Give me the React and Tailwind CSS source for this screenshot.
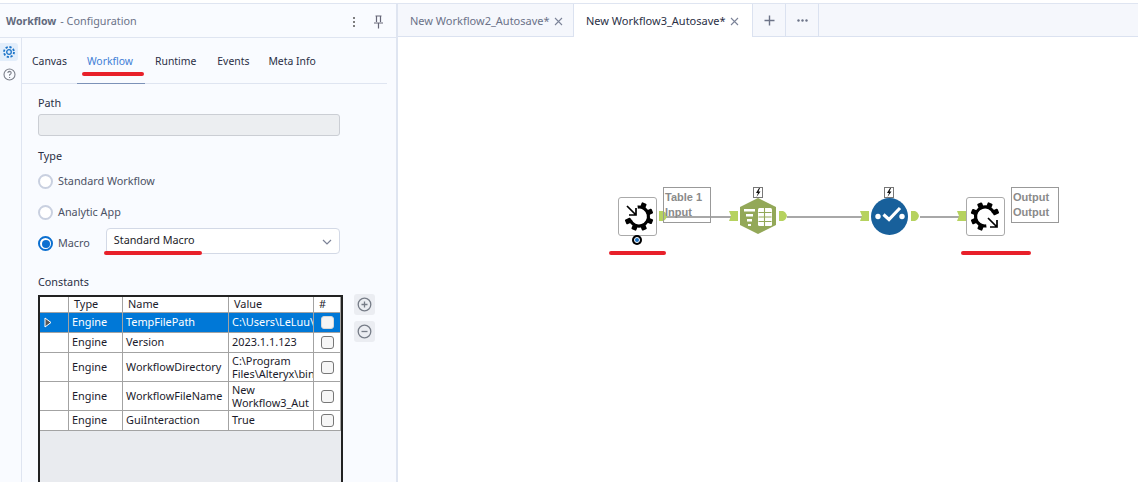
import React from "react";

const F = { fontFamily: '"Noto Sans", "Open Sans", sans-serif' };

function Radio({ on }) {
  return on ? (
    <span className="w-[15px] h-[15px] rounded-full border-2 border-[#0b6fd0] bg-white flex items-center justify-center shrink-0">
      <span className="w-[8px] h-[8px] rounded-full bg-[#0b6fd0]" />
    </span>
  ) : (
    <span className="w-[15px] h-[15px] rounded-full border-2 border-[#c9d0e0] bg-white shrink-0" />
  );
}

function polar(cx, cy, r, deg) {
  const a = ((deg - 90) * Math.PI) / 180;
  return [cx + r * Math.cos(a), cy + r * Math.sin(a)];
}

function Gear({ flip }) {
  const cx = 16;
  const cy = 15.5;
  const [sx, sy] = polar(cx, cy, 9.5, -8);
  const [ex, ey] = polar(cx, cy, 9.5, 248);
  const teeth = [22, 67, 112, 157, 202, 247];
  const ring = (
    <g transform={flip ? "rotate(180 15 15.5)" : undefined}>
      {teeth.map((a) => (
        <rect key={a} x={cx - 2.6} y={cy - 14.5} width="5.2" height="6" rx="1" fill="#000" transform={`rotate(${a} ${cx} ${cy})`} />
      ))}
      <path d={`M ${sx} ${sy} A 9.5 9.5 0 1 1 ${ex} ${ey}`} fill="none" stroke="#000" strokeWidth="3.2" />
    </g>
  );
  return (
    <svg width="32" height="31" viewBox="0 0 30 31">
      {ring}
      {flip ? (
        <path d="M17 17 L26 26 M26 19 V26 H19" stroke="#000" strokeWidth="1.7" fill="none" />
      ) : (
        <path d="M4 5 L13 14 M13 7 V14 H6" stroke="#000" strokeWidth="1.7" fill="none" />
      )}
    </svg>
  );
}

function Bolt({ className }) {
  return (
    <div className={`absolute w-[10px] h-[11px] border border-[#777] bg-white flex items-center justify-center ${className}`}>
      <svg width="6" height="9" viewBox="0 0 6 9"><path d="M4 0 L1 5 H3 L1.5 9 L5.5 3.5 H3.5 L5 0 Z" fill="#111" /></svg>
    </div>
  );
}

function InPort({ className }) {
  return (
    <svg className={`absolute ${className}`} width="9" height="10" viewBox="0 0 9 10">
      <path d="M0 0 H9 V10 H0 L2 5 Z" fill="#b6d25f" />
    </svg>
  );
}

function OutPort({ className }) {
  return (
    <svg className={`absolute ${className}`} width="8" height="10" viewBox="0 0 8 10">
      <path d="M0 0 H4 Q7 1 8 5 Q7 9 4 10 H0 Z" fill="#b6d25f" />
    </svg>
  );
}

function Cell({ children, className = "" }) {
  return <div className={`border-r border-b border-[#a3a3a3] flex items-center overflow-hidden whitespace-nowrap ${className}`}>{children}</div>;
}

function Check({ sel }) {
  return <span className={`w-[13px] h-[13px] rounded-[3px] border ${sel ? "border-[#d8d8d8] bg-[#f4f4f4]" : "border-[#777] bg-[#f6f6f6]"}`} />;
}

const rows = [
  { name: "TempFilePath", value: "C:\\Users\\LeLuu\\", h: "h-[20px]", sel: true },
  { name: "Version", value: "2023.1.1.123", h: "h-[20px]" },
  { name: "WorkflowDirectory", value: ["C:\\Program", "Files\\Alteryx\\bin"], h: "h-[29px]" },
  { name: "WorkflowFileName", value: ["New", "Workflow3_Aut"], h: "h-[29px]" },
  { name: "GuiInteraction", value: "True", h: "h-[20px]" },
];

const cols = "grid grid-cols-[29px_54px_106px_85px_27px]";

function Table() {
  return (
    <div className="w-[305px] h-[188px] border-2 border-[#222] bg-[#e9ebef] border-b-0 text-[10.9px] text-[#1b1b2b]">
      <div className={`${cols} h-[16px] bg-white`}>
        <Cell />
        <Cell className="pl-[5px]">Type</Cell>
        <Cell className="pl-[5px]">Name</Cell>
        <Cell className="pl-[5px]">Value</Cell>
        <Cell className="pl-[5px]">#</Cell>
      </div>
      {rows.map((r) => (
        <div key={r.name} className={`${cols} ${r.h} ${r.sel ? "bg-[#0078d7] text-white" : "bg-white"}`}>
          <Cell className="pl-[4px]">
            {r.sel && (
              <svg width="8" height="11" viewBox="0 0 8 11"><path d="M1 1 L7 5.5 L1 10 Z" fill="#555" stroke="#fff" strokeWidth="1" /></svg>
            )}
          </Cell>
          <Cell className="pl-[3px]">Engine</Cell>
          <Cell className="pl-[3px]">{r.name}</Cell>
          <Cell className="pl-[3px]">
            {Array.isArray(r.value) ? (
              <div className="leading-[13px]">
                <div>{r.value[0]}</div>
                <div>{r.value[1]}</div>
              </div>
            ) : (
              r.value
            )}
          </Cell>
          <Cell className="justify-center"><Check sel={r.sel} /></Cell>
        </div>
      ))}
    </div>
  );
}

function Tab({ active, label, w }) {
  return (
    <div className={`h-full flex items-center pt-[2px] border-r border-[#dbe2f0] pl-[12px] ${w} ${active ? "bg-white text-[#2a2f45]" : "bg-[#f5f7fc] text-[#6b7288] border-b"}`}>
      <span>{label}</span>
      <svg className="ml-[4px]" width="9" height="9" viewBox="0 0 9 9"><path d="M1 1 L8 8 M8 1 L1 8" stroke="#7c8499" strokeWidth="1.1" /></svg>
    </div>
  );
}

export default function App() {
  return (
    <div style={F} className="w-[1138px] h-[482px] relative overflow-hidden bg-white flex flex-col text-[10.8px]">
      <div className="h-[4px] bg-white border-b border-[#dfe5f1] shrink-0" />
      <div className="flex-1 flex min-h-0">
        {/* left panel */}
        <div className="w-[398px] shrink-0 bg-[#f9fbff] border-r-2 border-[#dfe5f1] flex flex-col">
          <div className="h-[34px] border-b border-[#dfe5f1] flex items-center pl-[6px] pr-[12px] pt-[2px] text-[10.5px] text-[#6b7288]">
            <span className="font-bold text-[#626a7d]">Workflow</span>
            <span className="ml-[4px] text-[10.8px]">- Configuration</span>
            <svg className="ml-auto" width="4" height="12" viewBox="0 0 4 12">
              <circle cx="2" cy="2" r="1" fill="#555" /><circle cx="2" cy="6" r="1" fill="#555" /><circle cx="2" cy="10" r="1" fill="#555" />
            </svg>
            <svg className="ml-[17px]" width="11" height="14" viewBox="0 0 11 14">
              <path d="M2.5 1 H8.5 M3.5 1 V7 M7.5 1 V7 M1 8 H10 M5.5 8 V13.5" stroke="#667" strokeWidth="1.2" fill="none" />
            </svg>
          </div>
          <div className="flex-1 flex min-h-0">
            <div className="w-[22px] shrink-0 border-r border-[#dfe5f1] flex flex-col">
              <div className="mt-[5px] h-[18px] bg-[#e3eefb] rounded-r-[3px] mr-[3px] flex items-center justify-center">
                <svg width="14" height="14" viewBox="0 0 14 14"><circle cx="7" cy="7" r="2.3" fill="none" stroke="#1c74c8" strokeWidth="1.3" /><circle cx="7" cy="7" r="5" fill="none" stroke="#1c74c8" strokeWidth="1.8" strokeDasharray="2.2 1.7" /></svg>
              </div>
              <div className="mt-[7px] mr-[3px] flex justify-center">
                <svg width="13" height="13" viewBox="0 0 13 13"><circle cx="6.5" cy="6.5" r="5.5" fill="none" stroke="#7b7f8a" strokeWidth="1.1" /><path d="M4.8 5 Q5 3.4 6.6 3.4 Q8.3 3.6 8.2 5 Q8 6 6.6 6.7 V7.8 M6.6 9 V10" stroke="#7b7f8a" strokeWidth="1.1" fill="none" /></svg>
              </div>
            </div>
            <div className="flex-1 min-w-0">
              <div className="h-[46px] mr-[9px] pt-[2px] border-b border-[#dfe5f1] flex items-center pl-[10px] text-[10.4px] text-[#2a2f45] relative">
                <span>Canvas</span>
                <span className="ml-[20px] text-[#3f7ed6]">Workflow</span>
                <span className="ml-[22px]">Runtime</span>
                <span className="ml-[21px]">Events</span>
                <span className="ml-[19px]">Meta Info</span>
                <div className="absolute left-[55px] bottom-[-1px] w-[68px] h-[1px] bg-[#7c92b8]" />
              </div>
              <div className="pl-[16px]">
                <div className="mt-[11px] text-[#2a2f45] leading-[15px]">Path</div>
                <div className="mt-[4px] w-[302px] h-[22px] rounded-[3px] border border-[#cbced4] bg-[#eceef1]" />
                <div className="mt-[12px] text-[#2a2f45] leading-[15px]">Type</div>
                <div className="mt-[11px] h-[15px] flex items-center gap-[5px] text-[#4b5164]"><Radio /><span>Standard Workflow</span></div>
                <div className="mt-[16px] h-[15px] flex items-center gap-[5px] text-[#4b5164]"><Radio /><span>Analytic App</span></div>
                <div className="mt-[8px] h-[26px] flex items-center text-[#4b5164]">
                  <div className="flex items-center gap-[5px] mt-[5px]"><Radio on /><span>Macro</span></div>
                  <div className="ml-[16px] w-[234px] h-[26px] rounded-[4px] border border-[#d3d9e6] bg-white flex items-center pl-[7px] pr-[7px] text-[#1c1c28] pb-[1px]">
                    Standard Macro
                    <svg className="ml-auto mt-[2px]" width="10" height="6" viewBox="0 0 10 6"><path d="M1 1 L5 5 L9 1" stroke="#7b8296" strokeWidth="1.2" fill="none" /></svg>
                  </div>
                </div>
                <div className="mt-[20px] text-[#2a2f45] leading-[15px]">Constants</div>
                <div className="mt-[6px] flex">
                  <Table />
                  <div className="ml-[11px] flex flex-col gap-[6px] mt-[-1px]">
                    <div className="w-[21px] h-[21px] rounded-[3px] bg-[#ebedf2] flex items-center justify-center">
                      <svg width="15" height="15" viewBox="0 0 15 15"><circle cx="7.5" cy="7.5" r="6.3" fill="none" stroke="#777d88" strokeWidth="1.3" /><path d="M4.5 7.5 H10.5 M7.5 4.5 V10.5" stroke="#777d88" strokeWidth="1.3" /></svg>
                    </div>
                    <div className="w-[21px] h-[21px] rounded-[3px] bg-[#ebedf2] flex items-center justify-center">
                      <svg width="15" height="15" viewBox="0 0 15 15"><circle cx="7.5" cy="7.5" r="6.3" fill="none" stroke="#777d88" strokeWidth="1.3" /><path d="M4.5 7.5 H10.5" stroke="#777d88" strokeWidth="1.3" /></svg>
                    </div>
                  </div>
                </div>
              </div>
            </div>
          </div>
        </div>
        {/* right */}
        <div className="flex-1 min-w-0 flex flex-col">
          <div className="h-[33px] bg-[#f5f7fc] flex items-center shrink-0 text-[11px]">
            <Tab w="w-[176px]" label="New Workflow2_Autosave*" />
            <Tab active w="w-[179px]" label="New Workflow3_Autosave*" />
            <div className="w-[33px] h-full border-r border-b border-[#dbe2f0] flex items-center justify-center">
              <svg width="11" height="11" viewBox="0 0 11 11"><path d="M5.5 0.5 V10.5 M0.5 5.5 H10.5" stroke="#6d7488" strokeWidth="1.4" /></svg>
            </div>
            <div className="w-[33px] h-full border-r border-b border-[#dbe2f0] flex items-center justify-center">
              <svg width="11" height="3" viewBox="0 0 11 3"><circle cx="1.5" cy="1.5" r="1.2" fill="#6d7488" /><circle cx="5.5" cy="1.5" r="1.2" fill="#6d7488" /><circle cx="9.5" cy="1.5" r="1.2" fill="#6d7488" /></svg>
            </div>
            <div className="flex-1 h-full border-b border-[#dbe2f0]" />
          </div>
          <div className="flex-1 bg-white" />
        </div>
      </div>

      {/* canvas: free-placed workflow */}
      <div className="absolute left-[664px] top-[216px] w-[67px] h-[1.5px] bg-[#a8a8a8]" />
      <div className="absolute left-[787px] top-[216px] w-[75px] h-[1.5px] bg-[#a8a8a8]" />
      <div className="absolute left-[920px] top-[216px] w-[42px] h-[1.5px] bg-[#a8a8a8]" />

      <div className="absolute left-[618px] top-[197px] w-[39px] h-[39px] rounded-[3px] border border-[#aaa] bg-white flex items-center justify-center"><Gear /></div>
      <OutPort className="left-[659px] top-[211px]" />
      <div className="absolute left-[632px] top-[235px] w-[10px] h-[10px] rounded-full bg-black flex items-center justify-center">
        <span className="w-[6px] h-[6px] rounded-full border-[1.5px] border-white bg-[#1b6fc0]" />
      </div>
      <div style={{ fontFamily: '"Liberation Sans", sans-serif' }} className="absolute left-[663px] top-[187px] w-[48px] h-[36px] border border-[#999] px-[1px] py-[2px] text-[11px] leading-[15px] font-bold text-[#8a8a8a]">
        Table 1<br />Input
      </div>

      <InPort className="left-[729px] top-[211px]" />
      <Bolt className="left-[753px] top-[187px]" />
      <svg className="absolute left-[739px] top-[198px]" width="38" height="36" viewBox="0 0 38 36">
        <path d="M19 0 L37 9 V27 L19 36 L1 27 V9 Z" fill="#93a858" />
        <path d="M5 11 H16 V13.5 H5 Z M7 16 H14 V18.5 H7 Z M8 21 H13 V23.5 H8 Z M9 26 H12 V28 H9 Z" fill="#fff" />
        <rect x="19" y="10" width="14" height="18" rx="1.5" fill="#fff" />
        <path d="M19.5 14.5 H32.5 M19.5 19 H32.5 M19.5 23.5 H32.5 M25.5 10 V28" stroke="#93a858" strokeWidth="1.1" />
      </svg>
      <OutPort className="left-[779px] top-[211px]" />

      <InPort className="left-[860px] top-[211px]" />
      <Bolt className="left-[884px] top-[187px]" />
      <svg className="absolute left-[871px] top-[198px]" width="37" height="37" viewBox="0 0 37 37">
        <circle cx="18.5" cy="18.5" r="18.5" fill="#18609b" />
        <circle cx="7" cy="18.5" r="2.7" fill="#fff" />
        <circle cx="31" cy="18.5" r="2.7" fill="#fff" />
        <path d="M12.5 16.5 L18 21.5 L29 10" stroke="#fff" strokeWidth="3.2" fill="none" />
      </svg>
      <OutPort className="left-[911px] top-[211px]" />

      <InPort className="left-[957px] top-[211px]" />
      <div className="absolute left-[966px] top-[197px] w-[39px] h-[39px] rounded-[3px] border border-[#aaa] bg-white flex items-center justify-center"><Gear flip /></div>
      <div style={{ fontFamily: '"Liberation Sans", sans-serif' }} className="absolute left-[1011px] top-[187px] w-[48px] h-[36px] border border-[#999] px-[1px] py-[2px] text-[11px] leading-[15px] font-bold text-[#8a8a8a]">
        Output<br />Output
      </div>

      {/* hand-drawn red annotations */}
      <div className="absolute left-[82px] top-[72px] w-[62px] h-[4px] rounded-full bg-[#e8202a]" />
      <div className="absolute left-[104px] top-[251px] w-[98px] h-[4px] rounded-full bg-[#e8202a]" />
      <div className="absolute left-[609px] top-[251px] w-[57px] h-[4px] rounded-full bg-[#e8202a]" />
      <div className="absolute left-[961px] top-[251px] w-[70px] h-[4px] rounded-full bg-[#e8202a]" />
    </div>
  );
}
